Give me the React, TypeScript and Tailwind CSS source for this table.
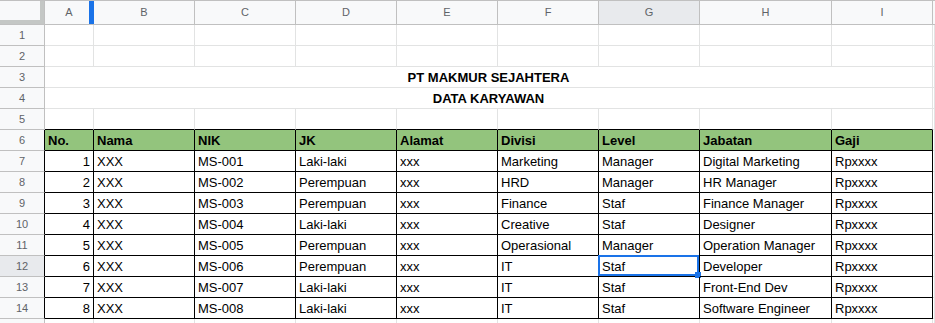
/**
 * Spreadsheet view — employee data sheet (PT Makmur Sejahtera).
 */

const COLS = ["A", "B", "C", "D", "E", "F", "G", "H", "I"]

const HEAD = ["No.", "Nama", "NIK", "JK", "Alamat", "Divisi", "Level", "Jabatan", "Gaji"]

const ROWS = [
  ["1", "XXX", "MS-001", "Laki-laki", "xxx", "Marketing", "Manager", "Digital Marketing", "Rpxxxx"],
  ["2", "XXX", "MS-002", "Perempuan", "xxx", "HRD", "Manager", "HR Manager", "Rpxxxx"],
  ["3", "XXX", "MS-003", "Perempuan", "xxx", "Finance", "Staf", "Finance Manager", "Rpxxxx"],
  ["4", "XXX", "MS-004", "Laki-laki", "xxx", "Creative", "Staf", "Designer", "Rpxxxx"],
  ["5", "XXX", "MS-005", "Perempuan", "xxx", "Operasional", "Manager", "Operation Manager", "Rpxxxx"],
  ["6", "XXX", "MS-006", "Perempuan", "xxx", "IT", "Staf", "Developer", "Rpxxxx"],
  ["7", "XXX", "MS-007", "Laki-laki", "xxx", "IT", "Staf", "Front-End Dev", "Rpxxxx"],
  ["8", "XXX", "MS-008", "Laki-laki", "xxx", "IT", "Staf", "Software Engineer", "Rpxxxx"],
]

const grid =
  "grid grid-cols-[45px_49px_101px_101px_101px_101px_101px_101px_132px_101px_1fr]"

function RowHead({ n, active, dark }: { n?: number; active?: boolean; dark?: boolean }) {
  return (
    <div
      className={`h-[21px] flex items-center justify-center border-b border-r border-b-[#c0c0c0] text-[11px] text-[#5f6368] ${
        dark ? "border-r-black" : "border-r-[#c0c0c0]"
      } ${active ? "bg-[#e8eaed]" : "bg-[#f8f9fa]"}`}
    >
      {n}
    </div>
  )
}

function Blank({ bottom }: { bottom?: boolean }) {
  return (
    <div
      className={`h-[21px] border-r border-b border-r-[#e2e3e3] ${
        bottom ? "border-b-black" : "border-b-[#e2e3e3]"
      }`}
    />
  )
}

export default function App() {
  return (
    <div className="w-[935px] h-[323px] overflow-hidden bg-white font-['Liberation_Sans',Arial,sans-serif] text-[13px] text-black">
      {/* Column letters */}
      <div className={`${grid} h-[25px] border-t border-[#c0c0c0] bg-[#f8f9fa]`}>
        <div className="relative border-b border-r border-[#c0c0c0]">
          <div className="absolute right-0 top-0 h-full w-[4px] bg-[#c4c7c5]" />
          <div className="absolute left-0 bottom-0 h-[4px] w-full bg-[#c4c7c5]" />
        </div>
        {COLS.map((c) => (
          <div
            key={c}
            className={`relative flex items-center justify-center border-b border-r border-[#c0c0c0] text-[11px] text-[#5f6368] ${
              c === "G" ? "bg-[#e8eaed]" : ""
            }`}
          >
            {c}
            {c === "A" && (
              <div className="absolute -right-px top-0 h-full w-[5px] bg-[#1a73e8]" />
            )}
          </div>
        ))}
        <div className="border-b border-[#c0c0c0]" />
      </div>

      {/* Rows 1-2 */}
      {[1, 2].map((n) => (
        <div key={n} className={grid}>
          <RowHead n={n} />
          {COLS.map((c) => (
            <Blank key={c} />
          ))}
          <Blank />
        </div>
      ))}

      {/* Rows 3-4: merged titles */}
      {["PT MAKMUR SEJAHTERA", "DATA KARYAWAN"].map((t, i) => (
        <div key={t} className={grid}>
          <RowHead n={i + 3} />
          <div className="col-span-9 h-[21px] border-r border-b border-[#e2e3e3] text-center font-bold leading-[21px] overflow-hidden">
            {t}
          </div>
          <Blank />
        </div>
      ))}

      {/* Row 5 */}
      <div className={grid}>
        <RowHead n={5} />
        {COLS.map((c) => (
          <Blank key={c} bottom />
        ))}
        <Blank />
      </div>

      {/* Row 6: table header */}
      <div className={grid}>
        <RowHead n={6} dark />
        {HEAD.map((h) => (
          <div
            key={h}
            className="h-[21px] border-r border-b border-black bg-[#93c47d] px-[3px] font-bold leading-[21px] whitespace-nowrap overflow-hidden"
          >
            {h}
          </div>
        ))}
        <Blank />
      </div>

      {/* Rows 7-14: data */}
      {ROWS.map((r, i) => (
        <div key={i} className={grid}>
          <RowHead n={i + 7} dark active={i === 5} />
          {r.map((v, j) => (
            <div
              key={j}
              className={`relative h-[21px] border-r border-b border-black px-[3px] leading-[21px] whitespace-nowrap ${
                j === 0 ? "text-right" : ""
              }`}
            >
              {v}
              {i === 5 && j === 6 && (
                <div className="absolute -left-px -top-px right-0 bottom-0 border-2 border-[#1a73e8]">
                  <div className="absolute -right-[4px] -bottom-[4px] w-[6px] h-[6px] bg-[#1a73e8]" />
                </div>
              )}
            </div>
          ))}
          <Blank />
        </div>
      ))}

      {/* Row 15 (only its top edge is visible) */}
      <div className={grid}>
        <RowHead />
        {COLS.map((c) => (
          <Blank key={c} />
        ))}
        <Blank />
      </div>
    </div>
  )
}
